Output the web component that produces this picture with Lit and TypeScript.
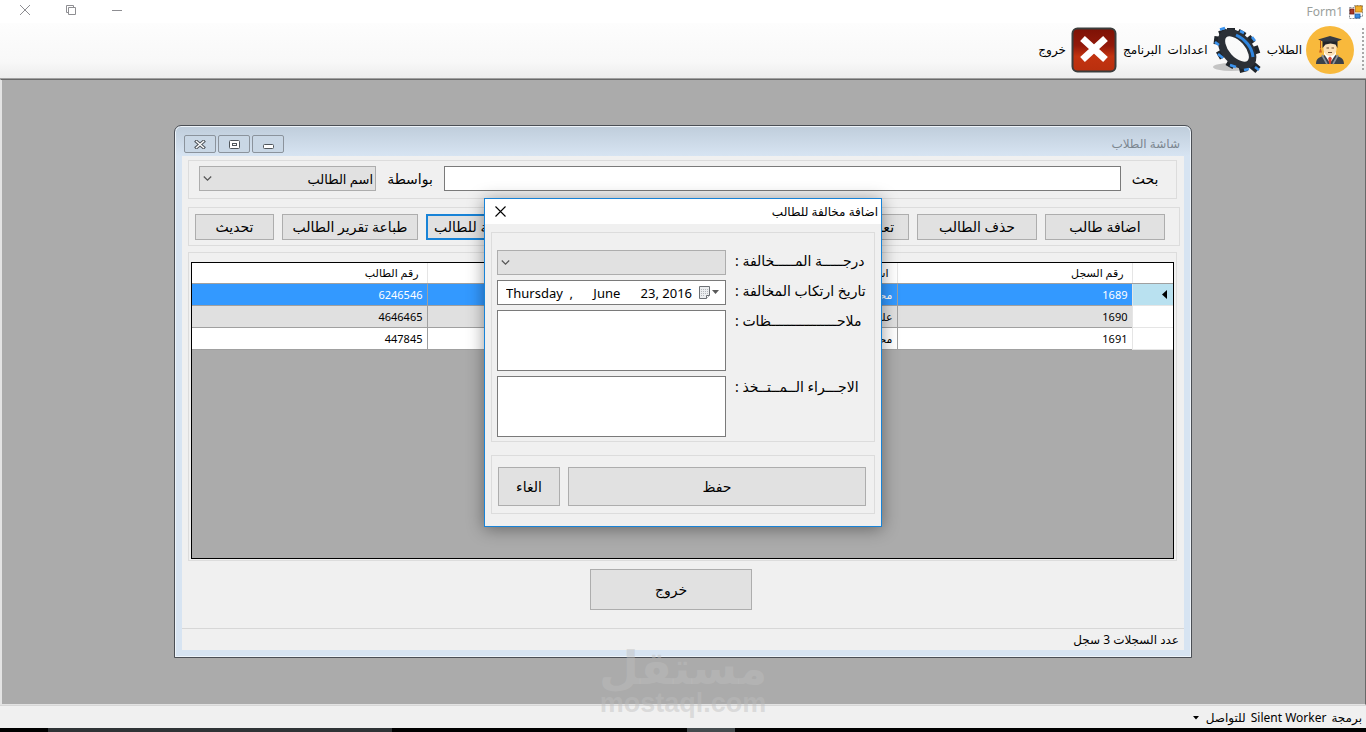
import { LitElement, html, css, svg } from "lit";
import { customElement, state } from "lit/decorators.js";

interface Row {
  record: string;
  name: string;
  id: string;
}

const base = css`
  * {
    box-sizing: border-box;
  }
  button,
  input,
  select,
  textarea {
    font: inherit;
    color: inherit;
    margin: 0;
    border-radius: 0;
    outline: none;
  }
  svg {
    display: block;
  }
  .btn {
    background: #e1e1e1;
    border: 1px solid #adadad;
    padding: 0;
    overflow: hidden;
    white-space: nowrap;
  }
  .group {
    border: 1px solid #dcdcdc;
  }
  .combo {
    position: relative;
    display: block;
  }
  .combo select {
    appearance: none;
    width: 100%;
    height: 25px;
    padding: 0 2px;
    background: #e1e1e1;
    border: 1px solid #adadad;
    font-size: 13px;
  }
  .combo svg {
    position: absolute;
    left: 4px;
    top: 8px;
    pointer-events: none;
  }
`;

const chevron = svg`<svg width="9" height="9" viewBox="0 0 9 9" fill="none" stroke="#555" stroke-width="1.2"><path d="M.8 2.5 4.5 6.2 8.2 2.5" /></svg>`;

@customElement("students-window")
export class StudentsWindow extends LitElement {
  static styles = [
    base,
    css`
      :host {
        display: block;
        width: min(1018px, calc(100% - 32px));
        border: 1px solid #4b4f55;
        border-radius: 7px 7px 0 0;
        background: linear-gradient(#bfcddb, #d7e4f2 30px);
        box-shadow: inset 0 0 0 1px #eef4fa;
        padding: 0 7px 7px;
      }
      .title {
        display: flex;
        align-items: flex-end;
        justify-content: space-between;
        height: 30px;
        padding: 0 4px 3px 2px;
        color: #7c8790;
        font-size: 12px;
      }
      .title h2 {
        margin: 0;
        font: inherit;
        line-height: 18px;
      }
      .controls {
        display: flex;
        direction: ltr;
        gap: 2px;
      }
      .controls button {
        display: grid;
        place-items: center;
        width: 32px;
        height: 18px;
        padding: 0;
        background: #c9d7e5;
        border: 1px solid #8b939c;
        border-radius: 2px;
      }
      .client {
        background: #f0f0f0;
        padding-top: 4px;
      }
      .group {
        margin: 0 7px 0 6px;
      }
      .search {
        display: grid;
        grid-template-columns: 48px minmax(0, 1fr) 68px 177px;
        align-items: center;
        height: 39px;
        padding: 0 7px 2px 10px;
        text-align: center;
      }
      .search input {
        width: 100%;
        height: 25px;
        border: 1px solid #7a7a7a;
        background: #fff;
        padding: 0 4px;
      }
      .actions {
        display: flex;
        gap: 8px;
        align-items: center;
        height: 39px;
        margin-top: 8px;
        margin-right: 4px;
        padding: 0 14px 0 6px;
      }
      .actions .btn {
        width: 120px;
        height: 26px;
      }
      .actions .edit {
        width: 108px;
      }
      .actions .focus {
        width: 140px;
        margin-right: auto;
        border: 2px solid #1883d7;
      }
      .actions .report {
        width: 136px;
      }
      .actions .refresh {
        width: 79px;
      }
      .records {
        margin-top: 6px;
        height: 309px;
        padding: 9px 2px 2px;
      }
      .grid {
        height: 297px;
        border: 1px solid #000;
        background: #ababab;
        overflow: hidden;
      }
      table {
        width: 100%;
        border-collapse: collapse;
        table-layout: fixed;
        font-size: 11px;
        line-height: 14px;
        background: #fff;
      }
      .c-mark {
        width: 41px;
      }
      .c-record,
      .c-id {
        width: 235px;
      }
      th {
        height: 20px;
        padding: 1px 8px 0 4px;
        font-weight: normal;
        text-align: right;
        border-left: 1px solid #e5e5e5;
        border-bottom: 1px solid #a0a0a0;
      }
      td {
        height: 22px;
        padding: 2px 4px 0;
        text-align: right;
        border-left: 1px solid #a0a0a0;
        border-bottom: 1px solid #a0a0a0;
      }
      tbody th {
        height: 22px;
        padding-right: 6px;
        border-color: #e5e5e5;
      }
      th:last-child,
      td:last-child {
        border-left: 0;
      }
      .alt td {
        background: #e0e0e0;
      }
      .sel td {
        background: #3399ff;
        color: #fff;
      }
      .sel th {
        background: #b9e1f0;
      }
      .exit {
        display: flex;
        justify-content: center;
        padding: 8px 24px 18px 0;
      }
      .exit .btn {
        width: 162px;
        height: 41px;
      }
      .status {
        height: 22px;
        border-top: 1px solid #d7d7d7;
        padding: 0 5px;
        font-size: 12px;
        line-height: 22px;
      }
    `,
  ];

  @state() private rows: Row[] = [
    { record: "1689", name: "محمد", id: "6246546" },
    { record: "1690", name: "علي", id: "4646465" },
    { record: "1691", name: "محمد", id: "447845" },
  ];
  @state() private selected = 0;

  render() {
    return html`
      <header class="title">
        <h2>شاشة الطلاب</h2>
        <div class="controls">
          <button aria-label="إغلاق">
            <svg width="12" height="9" viewBox="0 0 12 9" fill="none" stroke-linecap="square">
              <path d="M2.5 1.5 9.5 7.5M9.5 1.5 2.5 7.5" stroke="#50565c" stroke-width="3.4" />
              <path d="M2.5 1.5 9.5 7.5M9.5 1.5 2.5 7.5" stroke="#fff" stroke-width="1.4" />
            </svg>
          </button>
          <button aria-label="تكبير">
            <svg width="11" height="9" viewBox="0 0 11 9" fill="#fff" stroke="#50565c">
              <rect x=".5" y=".5" width="10" height="8" rx="1" />
              <rect x="3.5" y="3.5" width="4" height="2" />
            </svg>
          </button>
          <button aria-label="تصغير">
            <svg width="11" height="9" viewBox="0 0 11 9" fill="#fff" stroke="#50565c">
              <rect x=".5" y="4.5" width="10" height="4" rx="1" />
            </svg>
          </button>
        </div>
      </header>
      <div class="client">
        <div class="group search">
          <label for="q">بحث</label>
          <input id="q" type="text" />
          <label for="by">بواسطة</label>
          <span class="combo">
            <select id="by">
              <option>اسم الطالب</option>
            </select>
            ${chevron}
          </span>
        </div>
        <div class="group actions">
          <button class="btn">اضافة طالب</button>
          <button class="btn">حذف الطالب</button>
          <button class="btn edit">تعديل الطالب</button>
          <button class="btn focus">اضافة مخالفة للطالب</button>
          <button class="btn report">طباعة تقرير الطالب</button>
          <button class="btn refresh">تحديث</button>
        </div>
        <div class="group records">
          <div class="grid">
            <table>
              <colgroup>
                <col class="c-mark" />
                <col class="c-record" />
                <col />
                <col class="c-id" />
              </colgroup>
              <thead>
                <tr>
                  <th></th>
                  <th>رقم السجل</th>
                  <th>اسم الطالب</th>
                  <th>رقم الطالب</th>
                </tr>
              </thead>
              <tbody>
                ${this.rows.map(
                  (r, i) => html`<tr
                    class=${i === this.selected ? "sel" : i % 2 ? "alt" : ""}
                    @click=${() => (this.selected = i)}
                  >
                    <th scope="row">
                      ${i === this.selected
                        ? svg`<svg width="5" height="9" viewBox="0 0 5 9"><path d="M5 0v9L0 4.5z" /></svg>`
                        : ""}
                    </th>
                    <td>${r.record}</td>
                    <td>${r.name}</td>
                    <td>${r.id}</td>
                  </tr>`,
                )}
              </tbody>
            </table>
          </div>
        </div>
        <div class="exit"><button class="btn">خروج</button></div>
        <footer class="status">عدد السجلات 3 سجل</footer>
      </div>
    `;
  }
}

@customElement("violation-dialog")
export class ViolationDialog extends LitElement {
  static styles = [
    base,
    css`
      :host {
        display: block;
        width: 398px;
        background: #f0f0f0;
        border: 1px solid #1883d7;
        box-shadow: 0 2px 16px rgba(0, 0, 0, 0.4);
      }
      .title {
        display: flex;
        align-items: center;
        justify-content: space-between;
        height: 25px;
        padding: 0 3px 0 10px;
        background: #fff;
        font-size: 12px;
      }
      .title h2 {
        margin: 0;
        font: inherit;
      }
      .title button {
        padding: 0;
        border: 0;
        background: none;
      }
      .group {
        margin: 0 6px;
      }
      .form {
        display: grid;
        grid-template-columns: minmax(0, 1fr) 229px;
        column-gap: 9px;
        row-gap: 5px;
        margin-top: 8px;
        padding: 17px 8px 4px 5px;
      }
      .form label {
        text-align: left;
        line-height: 22px;
        white-space: nowrap;
      }
      .form textarea {
        width: 100%;
        height: 61px;
        border: 1px solid #7a7a7a;
        background: #fff;
        resize: none;
        display: block;
      }
      .date {
        display: flex;
        align-items: center;
        direction: ltr;
        height: 25px;
        padding: 0 5px 0 7px;
        border: 1px solid #7a7a7a;
        background: #fff;
      }
      .date input {
        flex: 1;
        min-width: 0;
        padding: 0 0 0 1px;
        border: 0;
        background: none;
        font-size: 13px;
      }
      .buttons {
        display: grid;
        grid-template-columns: 1fr 62px;
        gap: 8px;
        margin-top: 13px;
        margin-bottom: 12px;
        padding: 11px 8px 7px 6px;
      }
      .buttons .btn {
        height: 39px;
      }
    `,
  ];

  render() {
    return html`
      <header class="title">
        <h2>اضافة مخالفة للطالب</h2>
        <button aria-label="إغلاق">
          <svg width="11" height="11" viewBox="0 0 11 11" stroke="#000" stroke-width="1.1">
            <path d="M.5.5l10 10M10.500.5l-10 10" />
          </svg>
        </button>
      </header>
      <div class="group form">
        <label for="level">درجـــــة المـــــخالفة :</label>
        <span class="combo"><select id="level"></select>${chevron}</span>
        <label for="date">تاريخ ارتكاب المخالفة :</label>
        <div class="date">
          <input id="date" type="text" .value=${"Thursday  ,      June      23, 2016"} />
          <svg width="21" height="14" viewBox="0 0 21 14">
            <path d="M.5.5h10v9l-3 3h-7z" fill="#eceef0" stroke="#6c7075" />
            <path d="M10.500 9.500h-3v3" fill="#fff" stroke="#6c7075" />
            <path d="M2 3.500h7M2 5.500h7M2 7.500h7M2 9.500h4" stroke="#b4b8bd" fill="none" stroke-dasharray="1 1" />
            <path d="M13 4h7l-3.500 4z" fill="#5a5a5a" />
          </svg>
        </div>
        <label for="notes">ملاحــــــــــــــــظات :</label>
        <textarea id="notes"></textarea>
        <label for="procedure">الاجـــراء الــمــتــخذ :</label>
        <textarea id="procedure"></textarea>
      </div>
      <div class="group buttons">
        <button class="btn">حفظ</button>
        <button class="btn">الغاء</button>
      </div>
    `;
  }
}

@customElement("app-root")
export class AppRoot extends LitElement {
  static styles = [
    base,
    css`
      :host {
        display: flex;
        flex-direction: column;
        direction: rtl;
        height: 100vh;
        overflow: hidden;
        background: #f0f0f0;
        color: #000;
        font: 14px/20px "Noto Sans", "DejaVu Sans", sans-serif;
      }
      .caption {
        display: flex;
        justify-content: space-between;
        align-items: center;
        flex: none;
        height: 23px;
        padding: 0 3px 0 19px;
        background: #fff;
        color: #9aa09c;
        font-size: 12px;
      }
      .brand {
        display: flex;
        align-items: center;
        gap: 6px;
      }
      .wincontrols {
        display: flex;
        direction: ltr;
        gap: 34px;
        padding-bottom: 3px;
      }
      .wincontrols button {
        padding: 0;
        border: 0;
        background: none;
      }
      .toolbar {
        display: flex;
        align-items: center;
        flex: none;
        height: 56px;
        padding: 0 2px 2px 0;
        background: linear-gradient(#fdfdfd, #f8f8f8 70%, #ededed);
        border-bottom: 1px solid #a0a0a0;
        font-size: 12px;
      }
      .grip {
        width: 2px;
        height: 44px;
        margin-left: 8px;
        background: repeating-linear-gradient(#a8a8a8 0 2px, transparent 2px 4px);
      }
      .tool {
        display: flex;
        align-items: center;
        gap: 4px;
        padding: 0;
        border: 0;
        background: none;
        margin-left: 5px;
        white-space: nowrap;
      }
      .desktop {
        position: relative;
        flex: 1;
        min-height: 0;
        display: flex;
        justify-content: center;
        align-items: flex-start;
        padding-top: 45px;
        background: #ababab;
        border: 1px solid #e3e3e3;
        border-top-color: #696969;
        border-right-color: #696969;
        box-shadow: inset 1px 0 #e3e3e3;
      }
      .dialog {
        position: absolute;
        top: 118px;
        left: 50%;
        transform: translateX(-50%);
      }
      .footer {
        display: flex;
        align-items: center;
        gap: 5px;
        flex: none;
        height: 23px;
        padding: 2px 4px 0;
        border-top: 1px solid #d7d7d7;
        font-size: 12px;
      }
      .footer button {
        display: flex;
        align-items: center;
        gap: 7px;
        padding: 0;
        border: 0;
        background: none;
      }
      .taskbar {
        flex: none;
        height: 4px;
        direction: ltr;
        display: grid;
        grid-template-columns: 48fr 344fr 295fr 48fr 631fr;
        background: #000;
      }
      .find {
        grid-column: 2;
        background: #2f3336;
      }
      .task {
        grid-column: 4;
        background: #444a4d;
      }
      .watermark {
        position: absolute;
        left: 50%;
        bottom: 15px;
        transform: translateX(-50%);
        color: rgba(190, 190, 190, 0.45);
        font-weight: bold;
        text-align: center;
        pointer-events: none;
      }
      .wm-ar {
        font-size: 46px;
        line-height: 48px;
      }
      .wm-en {
        font-family: "Liberation Sans", sans-serif;
        font-size: 27px;
        line-height: 27px;
      }
    `,
  ];

  render() {
    return html`
      <header class="caption">
        <span class="brand">
          <svg width="14" height="14" viewBox="0 0 14 14">
            <path d="M.5 2.500h5v-2h8v11h-3v2h-10z" fill="#fff" stroke="#8b8f94" stroke-dasharray="2 1" />
            <rect x="1" y="4" width="4" height="5" fill="#a8382a" stroke="#6d1f16" stroke-width=".8" />
            <rect x="6.500" y="1" width="6.500" height="6" fill="#f3b02b" stroke="#b87913" stroke-width=".8" />
            <rect x="6" y="9" width="5" height="4" fill="#3a8de0" stroke="#1b5ea8" stroke-width=".8" />
          </svg>
          Form1
        </span>
        <span class="wincontrols">
          <button aria-label="إغلاق">
            <svg width="12" height="12" viewBox="0 0 12 12" stroke="#8e8e92"><path d="M1 1l10 10M11 1 1 11" /></svg>
          </button>
          <button aria-label="استعادة">
            <svg width="12" height="12" viewBox="0 0 12 12" fill="none" stroke="#8e8e92">
              <path d="M3.500 3.500h7v7h-7zM3.500 8.500h-2v-7h7v2" />
            </svg>
          </button>
          <button aria-label="تصغير">
            <svg width="12" height="12" viewBox="0 0 12 12" stroke="#8e8e92"><path d="M1 6.500h10" /></svg>
          </button>
        </span>
      </header>

      <nav class="toolbar">
        <span class="grip"></span>
        <button class="tool">
          <svg width="48" height="48" viewBox="0 0 48 48">
            <circle cx="24" cy="24" r="24" fill="#f8b93c" />
            <path d="M10 38c0-6 4-7 9-9h10c5 2 9 3 9 9z" fill="#3c4149" />
            <path d="M18 28l6 9 6-9v-3H18z" fill="#fff" />
            <path d="M16 29l5 9M32 29l-5 9" stroke="#8d939c" stroke-width="1.600" />
            <path d="M24 30.500l1.800 1.500-1 6h-1.600l-1-6z" fill="#d8402c" />
            <path d="M17.500 17v6c0 4 3 7 6.500 7s6.500-3 6.500-7v-6z" fill="#fbe0b8" />
            <path d="M16.500 22v-8h15v8l-2-3.500-5-1-5 1z" fill="#22252b" />
            <path d="M20.500 22h2.500M25.500 22H28M22 26.500h4" stroke="#6b4a30" />
            <path d="M12 13.500 24 10l12 3.500-5 2H17z" fill="#363b43" />
            <path d="M14.500 14v8" stroke="#b3531e" />
            <path d="M13 26.500l1.500-5 1.500 5z" fill="#d1641f" />
          </svg>
          الطلاب
        </button>
        <button class="tool">
          <svg width="50" height="48" viewBox="1 0 50 48">
            <ellipse cx="20" cy="41" rx="18" ry="4" fill="#c4c4c4" />
            <g fill="none">
              <path
                d="M13 10 11 4M20 8 20 2M29 10 32 5M37 16 42 12M42 25 48 23M40 38 47 44M31 38 33 46M22 34 18 41M14 26 7 30M11 15 3 14"
                stroke="#20252b"
                stroke-width="8"
                stroke-linejoin="round"
              />
              <ellipse cx="26" cy="23" rx="19.500" ry="11.500" transform="rotate(48 26 23)" stroke="#2b3037" stroke-width="7.500" />
              <path d="M25 9c9 4 16 12 17 22" stroke="#2f86e0" stroke-width="3" />
              <path d="M9 3.500 14 2M4 16l4 3M7 28l5 4M19 39l6 2M33 44l5-1M44 41l4 3M29 5l4 2M41 11l3 4" stroke="#3b93ee" stroke-width="2.600" />
            </g>
          </svg>
          اعدادات&nbsp; البرنامج
        </button>
        <button class="tool">
          <svg width="48" height="48" viewBox="0 0 48 48">
            <defs>
              <linearGradient id="red" x1="0" y1="0" x2="0" y2="1">
                <stop offset="0" stop-color="#7d1205" />
                <stop offset=".4" stop-color="#92190a" />
                <stop offset=".65" stop-color="#c23310" />
                <stop offset="1" stop-color="#b92f0e" />
              </linearGradient>
            </defs>
            <rect x="2.500" y="2.500" width="43" height="43" rx="5" fill="url(#red)" stroke="#3b3d3c" stroke-width="2" />
            <path d="M12.500 12.500l23 21M35.500 12.500l-23 21" stroke="#fff" stroke-width="7" />
          </svg>
          خروج
        </button>
      </nav>

      <main class="desktop">
        <students-window></students-window>
        <violation-dialog class="dialog"></violation-dialog>
      </main>

      <footer class="footer">
        <span>برمجة</span>
        <span>Silent Worker</span>
        <button>
          للتواصل
          <svg width="6" height="4" viewBox="0 0 6 4"><path d="M0 0h6L3 3.500z" /></svg>
        </button>
      </footer>
      <div class="taskbar"><span class="find"></span><span class="task"></span></div>
      <div class="watermark">
        <div class="wm-ar">مستقل</div>
        <div class="wm-en">mostaql.com</div>
      </div>
    `;
  }
}
